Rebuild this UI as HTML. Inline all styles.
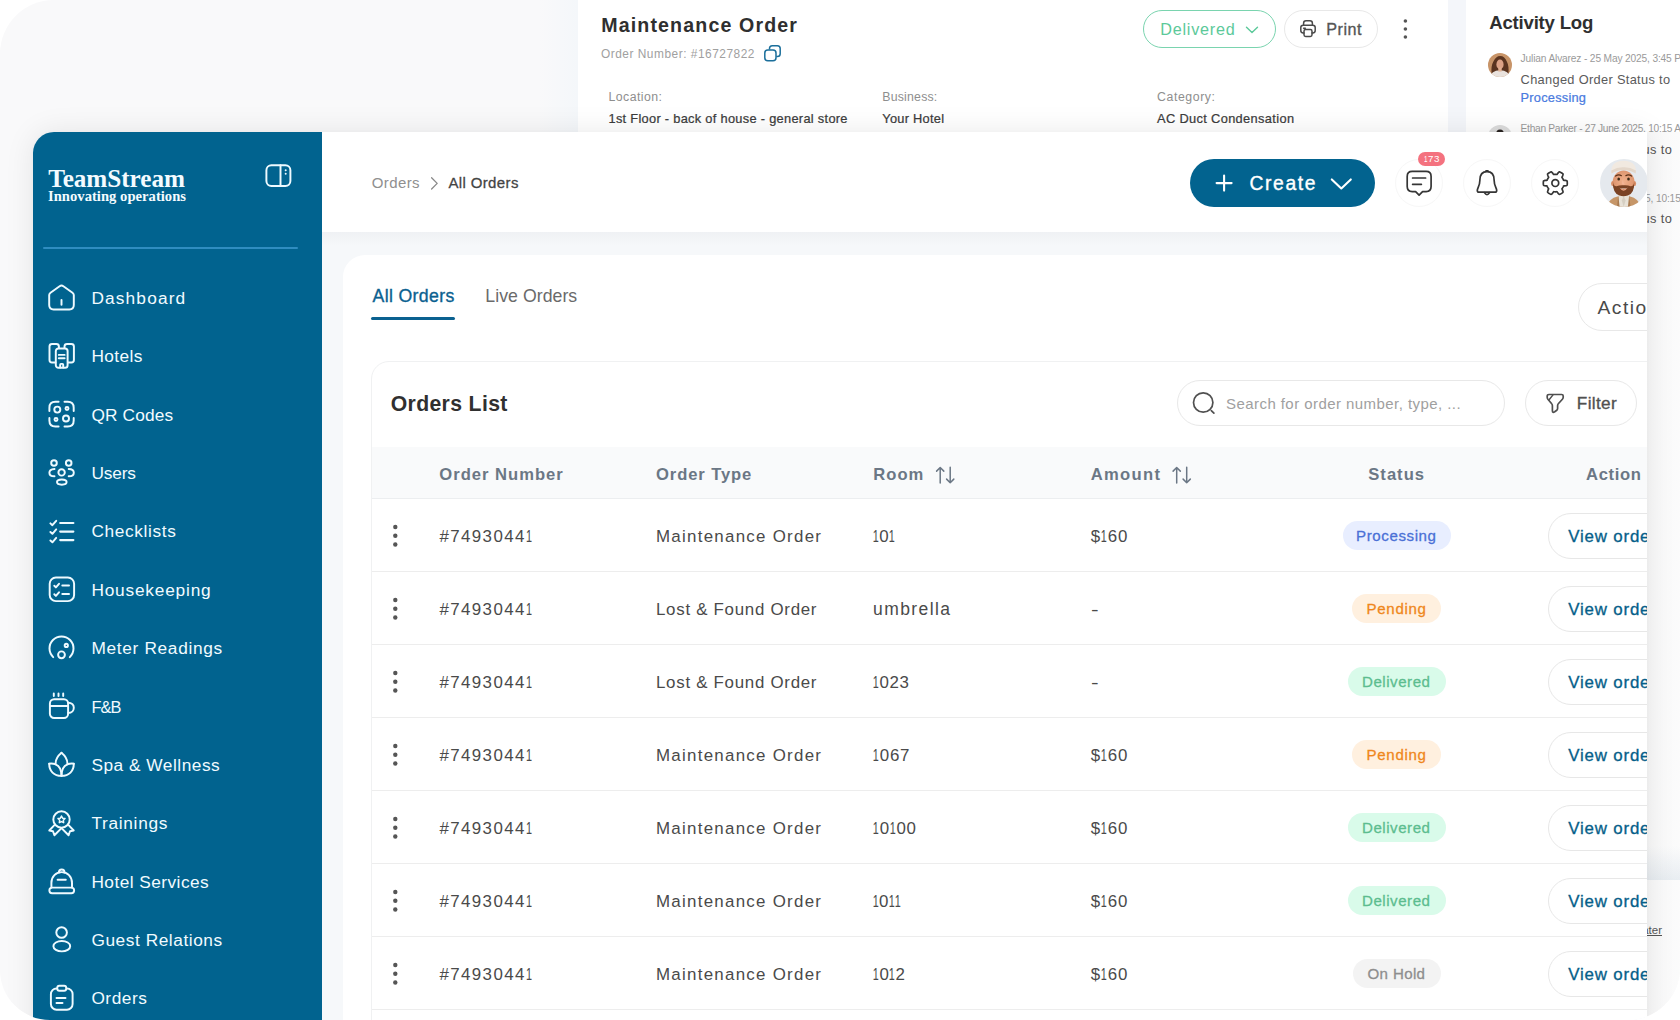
<!DOCTYPE html>
<html lang="en">
<head>
<meta charset="utf-8">
<title>TeamStream – Orders</title>
<style>
*{box-sizing:border-box;margin:0;padding:0}
html,body{width:1680px;height:1020px;overflow:hidden;background:#fff}
body{position:relative;font-family:"Liberation Sans",sans-serif}
.abs,.t,svg.i{position:absolute}
.t{white-space:nowrap;line-height:1;display:block}
#canvas{position:absolute;left:0;top:0;width:1680px;height:1020px;background:#f9f9fa;border-radius:54px 0 52px 50px;overflow:hidden}
#front{position:absolute;left:0;top:0;width:1680px;height:1020px;clip-path:inset(132px 33px 0 33px round 21px 0 0 0)}
#fshadow{position:absolute;left:33px;top:132px;width:1614px;height:920px;border-radius:21px 0 0 0;box-shadow:0 0 30px rgba(0,0,0,.085),0 0 5px rgba(0,0,0,.025)}
svg.i{overflow:visible}
.n1{font-style:normal;display:inline-block;transform:scaleX(.64);margin:0 -0.1em 0 -0.105em}
.w{fill:none;stroke:#eefaff;stroke-width:1.95;stroke-linecap:round;stroke-linejoin:round}
.k{fill:none;stroke:#353535;stroke-width:1.7;stroke-linecap:round;stroke-linejoin:round}
</style>
</head>
<body>
<div id="canvas">
<div class="abs" style="left:538px;top:-10px;width:40px;height:160px;background:linear-gradient(90deg,rgba(244,247,250,0),#f4f7fa)"></div>
<div class="abs" style="left:578px;top:-10px;width:870px;height:170px;background:#fff"></div>
<div class="abs" style="left:1448px;top:-10px;width:18px;height:170px;background:#f4f6fa"></div>
<div class="abs" style="left:1466px;top:-10px;width:230px;height:878px;background:#fff"></div>
<div class="abs" style="left:1466px;top:846px;width:230px;height:34px;background:linear-gradient(180deg,#fff,#ecf1f5)"></div>
<div class="abs" style="left:1466px;top:880px;width:230px;height:160px;background:#fff"></div>
<div class="abs" style="left:1647px;top:132px;width:33px;height:900px;background:linear-gradient(90deg,rgba(60,60,70,.035),rgba(60,60,70,.02))"></div>
<div class="abs" style="left:1143px;top:10px;width:133px;height:38px;border:1.4px solid #7ad4af;border-radius:19px"></div>
<div class="abs" style="left:1284px;top:10px;width:94px;height:38px;border:1px solid #e8e8e8;border-radius:19px"></div>
<svg class="i" style="left:1488.2px;top:52.7px" width="24" height="24" viewBox="0 0 24 24"><defs><clipPath id="ca"><circle cx="12" cy="12" r="12"/></clipPath></defs><g clip-path="url(#ca)"><rect width="24" height="24" fill="#c89468"/><path d="M3.6 21 Q2.8 13 5.4 8.6 Q7.8 3 12.2 3 Q16.8 3 18.8 8.6 Q21.2 13 20.4 21 Z" fill="#5a3420"/><ellipse cx="12" cy="11.4" rx="3.6" ry="4.9" fill="#dca286"/><path d="M2 24 Q3 17.6 12 17.2 Q21 17.6 22 24 Z" fill="#e9e2dd"/><rect x="10.3" y="14.5" width="3.4" height="4" fill="#e2b092"/></g></svg>
<svg class="i" style="left:1488.2px;top:124.5px" width="24" height="24" viewBox="0 0 24 24"><defs><clipPath id="cb"><circle cx="12" cy="12" r="12"/></clipPath></defs><g clip-path="url(#cb)"><rect width="24" height="24" fill="#dcdcdc"/><ellipse cx="12" cy="10.5" rx="3.6" ry="4.4" fill="#d9a88a"/><path d="M8 9.5 Q8 4.5 12 4.5 Q16 4.5 16 9.5 Q14 7 12 7.2 Q10 7 8 9.5Z" fill="#2a2422"/><path d="M3 24 Q3 17 12 17 Q21 17 21 24 Z" fill="#3b3f46"/></g></svg>
<svg class="i" style="left:0;top:0" width="1680" height="1020" viewBox="0 0 1680 1020"><g fill="none" stroke="#1b6f9b" stroke-width="1.5" stroke-linejoin="round"><path d="M769.5 49.6 V48.6 Q769.5 45.8 772.3 45.8 H777.4 Q780.2 45.8 780.2 48.6 V53.7 Q780.2 56.5 777.4 56.5 H776.3"/><rect x="764.8" y="50" width="11.2" height="10.8" rx="3"/></g><path d="M1246.5 27.3 L1252 32.6 L1257.5 27.3" fill="none" stroke="#5cc99a" stroke-width="1.4" stroke-linecap="round" stroke-linejoin="round"/><g fill="none" stroke="#4a4a4a" stroke-width="1.5" stroke-linejoin="round" stroke-linecap="round"><path d="M1303.6 25.2 V23.2 Q1303.6 20.8 1306 20.8 H1310 Q1312.4 20.8 1312.4 23.2 V25.2"/><path d="M1304 33 H1303.2 Q1300.8 33 1300.8 30.6 V27.6 Q1300.8 25.2 1303.2 25.2 H1312.8 Q1315.2 25.2 1315.2 27.6 V30.6 Q1315.2 33 1312.8 33 H1312"/><rect x="1304" y="29.6" width="8" height="6.8" rx="1.6"/><path d="M1303.6 28.3 H1305.4"/></g><g fill="#555"><circle cx="1405.4" cy="21" r="1.8"/><circle cx="1405.4" cy="29" r="1.8"/><circle cx="1405.4" cy="37" r="1.8"/></g></svg>
<span class="t" style="left:601.20px;top:14px;line-height:22px;font-size:19.6px;color:#2f2f2f;font-family:'Liberation Sans',sans-serif;font-weight:700;letter-spacing:1.145px;">Maintenance Order</span>
<span class="t" style="left:601.00px;top:47px;line-height:14px;font-size:11.9px;color:#a0a0a0;font-family:'Liberation Sans',sans-serif;font-weight:400;letter-spacing:0.512px;">Order Number: #16727822</span>
<span class="t" style="left:608.50px;top:90px;line-height:14px;font-size:12.3px;color:#8e8e8e;font-family:'Liberation Sans',sans-serif;font-weight:400;letter-spacing:0.447px;">Location:</span>
<span class="t" style="left:608.50px;top:111px;line-height:15px;font-size:12.8px;color:#3c3c3c;font-family:'Liberation Sans',sans-serif;font-weight:400;-webkit-text-stroke:0.24px currentColor;letter-spacing:0.302px;">1st Floor - back of house - general store</span>
<span class="t" style="left:882.30px;top:90px;line-height:14px;font-size:12.3px;color:#8e8e8e;font-family:'Liberation Sans',sans-serif;font-weight:400;letter-spacing:0.209px;">Business:</span>
<span class="t" style="left:882.30px;top:111px;line-height:15px;font-size:12.8px;color:#3c3c3c;font-family:'Liberation Sans',sans-serif;font-weight:400;-webkit-text-stroke:0.24px currentColor;letter-spacing:0.267px;">Your Hotel</span>
<span class="t" style="left:1157.00px;top:90px;line-height:14px;font-size:12.3px;color:#8e8e8e;font-family:'Liberation Sans',sans-serif;font-weight:400;letter-spacing:0.584px;">Category:</span>
<span class="t" style="left:1157.00px;top:111px;line-height:15px;font-size:12.8px;color:#3c3c3c;font-family:'Liberation Sans',sans-serif;font-weight:400;-webkit-text-stroke:0.24px currentColor;letter-spacing:0.359px;">AC Duct Condensation</span>
<span class="t" style="left:1160.30px;top:20px;line-height:18px;font-size:16.2px;color:#5cc99a;font-family:'Liberation Sans',sans-serif;font-weight:400;letter-spacing:0.751px;">Delivered</span>
<span class="t" style="left:1326.30px;top:20px;line-height:18px;font-size:16.2px;color:#555;font-family:'Liberation Sans',sans-serif;font-weight:400;-webkit-text-stroke:0.31px currentColor;letter-spacing:0.476px;">Print</span>
<span class="t" style="left:1489.20px;top:12px;line-height:21px;font-size:18.6px;color:#2f2f2f;font-family:'Liberation Sans',sans-serif;font-weight:700;letter-spacing:-0.201px;">Activity Log</span>
<span class="t" style="left:1520.60px;top:53px;line-height:11px;font-size:10.2px;color:#9a9a9a;font-family:'Liberation Sans',sans-serif;font-weight:400;letter-spacing:-0.155px;">Julian Alvarez - 25 May 2025, 3:45 PM</span>
<span class="t" style="left:1520.60px;top:72px;line-height:15px;font-size:12.8px;color:#5a5a5a;font-family:'Liberation Sans',sans-serif;font-weight:400;letter-spacing:0.324px;">Changed Order Status to</span>
<span class="t" style="left:1520.60px;top:90px;line-height:15px;font-size:12.8px;color:#4a7be0;font-family:'Liberation Sans',sans-serif;font-weight:400;-webkit-text-stroke:0.24px currentColor;letter-spacing:0.232px;">Processing</span>
<span class="t" style="left:1520.60px;top:123px;line-height:11px;font-size:10.2px;color:#9a9a9a;font-family:'Liberation Sans',sans-serif;font-weight:400;letter-spacing:-0.289px;">Ethan Parker - 27 June 2025, 10:15 AM</span>
<span class="t" style="left:1520.60px;top:142px;line-height:15px;font-size:12.8px;color:#555;font-family:'Liberation Sans',sans-serif;font-weight:400;letter-spacing:0.408px;">Changed Order Status to</span>
<span class="t" style="left:1520.60px;top:160px;line-height:15px;font-size:12.8px;color:#ef871b;font-family:'Liberation Sans',sans-serif;font-weight:400;-webkit-text-stroke:0.24px currentColor;letter-spacing:0.405px;">Pending</span>
<span class="t" style="left:1520.60px;top:193px;line-height:11px;font-size:10.2px;color:#9a9a9a;font-family:'Liberation Sans',sans-serif;font-weight:400;letter-spacing:-0.148px;">Olivia Bennett - 27 June 2025, 10:15 AM</span>
<span class="t" style="left:1520.60px;top:211px;line-height:15px;font-size:12.8px;color:#555;font-family:'Liberation Sans',sans-serif;font-weight:400;letter-spacing:0.408px;">Changed Order Status to</span>
<span class="t" style="right:18.00px;top:924px;line-height:12px;font-size:11.5px;color:#555;font-family:'Liberation Sans',sans-serif;font-weight:400;text-decoration:underline;">Read later</span>
<div id="fshadow"></div>
<div id="front">
<div class="abs" style="left:33px;top:132px;width:289px;height:900px;background:#01638f"></div>
<div class="abs" style="left:322px;top:132px;width:1400px;height:100px;background:#fff"></div>
<div class="abs" style="left:322px;top:232px;width:1400px;height:800px;background:#f6f8fa"></div>
<div class="abs" style="left:322px;top:232px;width:1400px;height:14px;background:linear-gradient(180deg,rgba(233,235,238,.5),rgba(246,248,250,0))"></div>
<div class="abs" style="left:343px;top:255px;width:1400px;height:800px;background:#fff;border-radius:22px 0 0 0"></div>
<div class="abs" style="left:371px;top:361px;width:1400px;height:800px;background:#fff;border:1px solid #f0f1f2;border-radius:18px 0 0 0"></div>
<div class="abs" style="left:372px;top:447px;width:1400px;height:51px;background:#f9fafb"></div>
<div class="abs" style="left:372px;top:498px;width:1400px;height:1px;background:#eceef0"></div>
<div class="abs" style="left:372px;top:571px;width:1400px;height:1px;background:#ededed"></div>
<div class="abs" style="left:372px;top:644px;width:1400px;height:1px;background:#ededed"></div>
<div class="abs" style="left:372px;top:717px;width:1400px;height:1px;background:#ededed"></div>
<div class="abs" style="left:372px;top:790px;width:1400px;height:1px;background:#ededed"></div>
<div class="abs" style="left:372px;top:863px;width:1400px;height:1px;background:#ededed"></div>
<div class="abs" style="left:372px;top:936px;width:1400px;height:1px;background:#ededed"></div>
<div class="abs" style="left:372px;top:1009px;width:1400px;height:1px;background:#ededed"></div>
<div class="abs" style="left:43px;top:246.5px;width:255px;height:2px;background:#2f8dc0;border-radius:1px"></div>
<div class="abs" style="left:371px;top:316.5px;width:84px;height:3px;background:#0b6190;border-radius:2px"></div>
<div class="abs" style="left:1577.5px;top:283px;width:160px;height:47.5px;border:1px solid #e8e8e8;border-radius:24px"></div>
<div class="abs" style="left:1177.3px;top:380px;width:327.7px;height:46px;border:1px solid #e8e8e8;border-radius:23px"></div>
<div class="abs" style="left:1525px;top:380px;width:111.7px;height:46px;border:1px solid #e8e8e8;border-radius:23px"></div>
<div class="abs" style="left:1190px;top:159px;width:185px;height:48px;background:#02638f;border-radius:24px"></div>
<div class="abs" style="left:1395px;top:159px;width:48px;height:48px;border:1px solid #f7f7f7;border-radius:24px"></div>
<div class="abs" style="left:1463px;top:159px;width:48px;height:48px;border:1px solid #f7f7f7;border-radius:24px"></div>
<div class="abs" style="left:1531px;top:159px;width:48px;height:48px;border:1px solid #f7f7f7;border-radius:24px"></div>
<div class="abs" style="left:1418.2px;top:151.5px;width:26.8px;height:14.3px;background:#f4727f;border-radius:7.2px"></div>
<div class="abs" style="left:1342.5px;top:521.0px;width:108px;height:29px;background:#e8eeff;border-radius:14.5px"></div>
<div class="abs" style="left:1548px;top:513.0px;width:170px;height:45.6px;border:1px solid #e7e7e7;border-radius:23px"></div>
<div class="abs" style="left:1352.0px;top:594.0px;width:89px;height:29px;background:#fff0df;border-radius:14.5px"></div>
<div class="abs" style="left:1548px;top:586.0px;width:170px;height:45.6px;border:1px solid #e7e7e7;border-radius:23px"></div>
<div class="abs" style="left:1347.5px;top:667.0px;width:98px;height:29px;background:#d9fbea;border-radius:14.5px"></div>
<div class="abs" style="left:1548px;top:659.0px;width:170px;height:45.6px;border:1px solid #e7e7e7;border-radius:23px"></div>
<div class="abs" style="left:1352.0px;top:740.0px;width:89px;height:29px;background:#fff0df;border-radius:14.5px"></div>
<div class="abs" style="left:1548px;top:732.0px;width:170px;height:45.6px;border:1px solid #e7e7e7;border-radius:23px"></div>
<div class="abs" style="left:1347.5px;top:813.0px;width:98px;height:29px;background:#d9fbea;border-radius:14.5px"></div>
<div class="abs" style="left:1548px;top:805.0px;width:170px;height:45.6px;border:1px solid #e7e7e7;border-radius:23px"></div>
<div class="abs" style="left:1347.5px;top:886.0px;width:98px;height:29px;background:#d9fbea;border-radius:14.5px"></div>
<div class="abs" style="left:1548px;top:878.0px;width:170px;height:45.6px;border:1px solid #e7e7e7;border-radius:23px"></div>
<div class="abs" style="left:1352.5px;top:959.0px;width:88px;height:29px;background:#f3f3f3;border-radius:14.5px"></div>
<div class="abs" style="left:1548px;top:951.0px;width:170px;height:45.6px;border:1px solid #e7e7e7;border-radius:23px"></div>
<svg class="i" style="left:0;top:0" width="1680" height="1020" viewBox="0 0 1680 1020"><g class="w" transform="translate(48 283.90)"><path d="M1.2 11.2 Q1.2 9.7 2.5 8.8 L11.6 2.3 Q13.5 1 15.4 2.3 L24.5 8.8 Q25.8 9.7 25.8 11.2 V21.2 Q25.8 25.6 21.4 25.6 H5.6 Q1.2 25.6 1.2 21.2 Z"/><path d="M13.5 16.2 V20.8"/></g><g class="w" transform="translate(48 342.30)"><path d="M7.4 20.3 H4 Q1.5 20.3 1.5 17.8 V4.2 Q1.5 1.7 4 1.7 H8.4 Q10.9 1.7 10.9 4.2 V5.6"/><path d="M20 20.3 H23.4 Q25.9 20.3 25.9 17.8 V4.2 Q25.9 1.7 23.4 1.7 H19 Q16.5 1.7 16.5 4.2 V5.6"/><rect x="7.8" y="6.2" width="11.8" height="19.3" rx="2.6"/><path d="M10.8 12.6 H16.6 M10.8 16 H16.6"/><path d="M12.2 25.3 V22.4 Q12.2 21.6 13 21.6 H14.4 Q15.2 21.6 15.2 22.4 V25.3"/></g><g class="w" transform="translate(48 400.70)"><path d="M1.4 10.3 V7 Q1.4 1 7.4 1 H10.6"/><path d="M16.5 1 H19.7 Q25.7 1 25.7 7 V10.3"/><path d="M1.4 17.3 V19.7 Q1.4 25.7 7.4 25.7 H10.6"/><path d="M16.5 25.7 H19.7 Q25.7 25.7 25.7 19.7 V17.3"/><circle cx="9.3" cy="8.9" r="3"/><circle cx="19" cy="7.8" r="1.5"/><circle cx="8" cy="18.8" r="1.5"/><circle cx="18" cy="17.8" r="3"/></g><g class="w" transform="translate(48 459.10)"><circle cx="6" cy="3.9" r="2.8"/><circle cx="20.7" cy="3.9" r="2.8"/><circle cx="13.6" cy="13.3" r="3.2"/><ellipse cx="13.8" cy="23" rx="4.8" ry="2.6"/><path d="M6.5 9.9 C2.5 9.9 1.4 12 1.4 13.6 C1.4 15.4 2.5 17.2 6.5 17.2"/><path d="M20.7 9.9 C24.7 9.9 25.8 12 25.8 13.6 C25.8 15.4 24.7 17.2 20.7 17.2"/></g><g class="w" transform="translate(48 517.50)"><path d="M2.4 5.9 L4.4 7.7 L8.2 3.3"/><path d="M12.2 5.5 H25.4" stroke-width="2.1"/><path d="M2.4 14.5 L4.4 16.3 L8.2 11.899999999999999"/><path d="M12.2 14.1 H25.4" stroke-width="2.1"/><path d="M2.4 23.0 L4.4 24.8 L8.2 20.400000000000002"/><path d="M12.2 22.6 H25.4" stroke-width="2.1"/></g><g class="w" transform="translate(48 575.90)"><rect x="1.7" y="1.6" width="24.4" height="23.6" rx="6.2"/><path d="M6.3 9.9 L7.9 11.5 L11 7.8999999999999995"/><path d="M14.3 9.6 H21"/><path d="M6.3 18.400000000000002 L7.9 20.0 L11 16.400000000000002"/><path d="M14.3 18.1 H21"/></g><g class="w" transform="translate(48 634.30)"><path d="M5.2 22.8 A12 12 0 1 1 21.8 22.8"/><circle cx="18.3" cy="11.1" r="1.6"/><circle cx="13.5" cy="20.5" r="3.4"/></g><g class="w" transform="translate(48 692.70)"><rect x="1.9" y="6.5" width="18.2" height="18.8" rx="4.2"/><path d="M1.9 13.2 H20.1"/><path d="M20.1 10 C24 10 25.8 12.5 25.8 15 C25.8 17.5 24 20.3 20.1 20.3"/><path d="M5.8 0.8 V3.2 M10.5 0.8 V3.2 M15.2 0.8 V3.2"/></g><g class="w" transform="translate(48 751.10)"><path d="M13.5 1.7 C9.3 5.2 7.3 9 7.6 13.2"/><path d="M13.5 1.7 C17.7 5.2 19.7 9 19.4 13.2"/><path d="M1.2 12.6 Q4.5 12.2 7.6 13.2 C11 14.6 13.5 18 13.5 24.8"/><path d="M25.8 12.6 Q22.5 12.2 19.4 13.2 C16 14.6 13.5 18 13.5 24.8"/><path d="M1.2 12.6 C1.2 20 6 24.8 13.5 24.8 C21 24.8 25.8 20 25.8 12.6"/></g><g class="w" transform="translate(48 809.50)"><circle cx="13.5" cy="10" r="8.2"/><path d="M13.50 6.50 L14.62 8.66 L17.02 9.06 L15.31 10.79 L15.67 13.19 L13.50 12.10 L11.33 13.19 L11.69 10.79 L9.98 9.06 L12.38 8.66 Z" stroke-width="1.5"/><path d="M6.4 15.6 L1.3 21 L5 21.8 L6.4 25.8 L13.5 18.6 L20.6 25.8 L22 21.8 L25.7 21 L20.6 15.6"/></g><g class="w" transform="translate(48 867.90)"><rect x="1.4" y="19.7" width="24.7" height="5.6" rx="2.7"/><path d="M3.4 19.7 V15 C3.4 8.5 8 4.2 13.7 4.2 C19.4 4.2 24 8.5 24 15 V19.7"/><path d="M10.9 4.6 C10.9 0.5 16.5 0.5 16.5 4.6"/><path d="M9.6 11.9 H17.8"/></g><g class="w" transform="translate(48 926.30)"><circle cx="13.6" cy="6.2" r="5.3"/><ellipse cx="13.8" cy="19.9" rx="8.4" ry="5.2"/></g><g class="w" transform="translate(48 984.70)"><rect x="2.9" y="3.8" width="21.7" height="21.2" rx="5.6"/><rect x="9.3" y="1.1" width="8.9" height="4.9" rx="2" fill="#01638f"/><path d="M8.5 13.2 H17.5 M8.5 18.3 H14.5"/></g><g class="w"><rect x="266.4" y="165.2" width="24" height="20.9" rx="5"/><path d="M280.5 165.2 V186.1"/></g><g fill="#eefaff"><circle cx="285.7" cy="170.3" r="1"/><circle cx="285.7" cy="173.8" r="1"/></g><path d="M431.6 177.8 L437.2 183.4 L431.6 189" fill="none" stroke="#8a8a8a" stroke-width="1.3" stroke-linecap="round" stroke-linejoin="round"/><g fill="none" stroke="#fff" stroke-width="2.1" stroke-linecap="round" stroke-linejoin="round"><path d="M1216.6 183.1 H1231.6 M1224.1 175.6 V190.6"/><path d="M1331.8 179.4 L1341.3 188.4 L1350.8 179.4"/></g><g class="k"><path d="M1412.2 171.4 H1426.1 Q1431.1 171.4 1431.1 176.4 V186.6 Q1431.1 191.6 1426.1 191.6 H1422.6 L1419.1 195.2 L1415.6 191.6 H1412.2 Q1407.2 191.6 1407.2 186.6 V176.4 Q1407.2 171.4 1412.2 171.4 Z"/><path d="M1412.6 178 H1425.6 M1412.6 184.3 H1421.4"/></g><g class="k"><path d="M1487 171.6 C1481.6 171.6 1479.9 176 1479.9 180 C1479.9 186 1477.3 188.2 1477.3 190.4 C1477.3 191.5 1478.1 192.1 1479.1 192.1 H1494.9 C1495.9 192.1 1496.7 191.5 1496.7 190.4 C1496.7 188.2 1494.1 186 1494.1 180 C1494.1 176 1492.4 171.6 1487 171.6 Z"/><path d="M1484.4 192.6 Q1487 196.6 1489.6 192.6"/><path d="M1486 170.9 H1488"/></g><g class="k"><path d="M1555.30 174.40 L1555.68 174.41 L1556.06 174.43 L1556.44 174.47 L1556.81 174.52 L1557.31 174.03 L1557.98 173.10 L1558.73 172.21 L1559.40 171.84 L1559.89 172.01 L1560.37 172.22 L1560.84 172.46 L1561.30 172.71 L1561.75 172.98 L1562.18 173.27 L1562.61 173.58 L1563.00 173.92 L1563.01 174.68 L1562.62 175.78 L1562.15 176.83 L1561.97 177.50 L1562.20 177.80 L1562.43 178.11 L1562.64 178.43 L1562.83 178.75 L1563.02 179.08 L1563.18 179.42 L1563.34 179.77 L1563.49 180.12 L1564.16 180.31 L1565.30 180.42 L1566.44 180.63 L1567.10 181.02 L1567.20 181.53 L1567.25 182.05 L1567.29 182.58 L1567.30 183.10 L1567.29 183.62 L1567.25 184.15 L1567.20 184.67 L1567.10 185.18 L1566.44 185.57 L1565.30 185.78 L1564.16 185.89 L1563.49 186.08 L1563.34 186.43 L1563.18 186.78 L1563.02 187.12 L1562.83 187.45 L1562.64 187.77 L1562.43 188.09 L1562.20 188.40 L1561.97 188.70 L1562.15 189.37 L1562.62 190.42 L1563.01 191.52 L1563.00 192.28 L1562.61 192.62 L1562.18 192.93 L1561.75 193.22 L1561.30 193.49 L1560.84 193.74 L1560.37 193.98 L1559.89 194.19 L1559.40 194.36 L1558.73 193.99 L1557.98 193.10 L1557.31 192.17 L1556.81 191.68 L1556.44 191.73 L1556.06 191.77 L1555.68 191.79 L1555.30 191.80 L1554.92 191.79 L1554.54 191.77 L1554.16 191.73 L1553.79 191.68 L1553.29 192.17 L1552.62 193.10 L1551.87 193.99 L1551.20 194.36 L1550.71 194.19 L1550.23 193.98 L1549.76 193.74 L1549.30 193.49 L1548.85 193.22 L1548.42 192.93 L1547.99 192.62 L1547.60 192.28 L1547.59 191.52 L1547.98 190.42 L1548.45 189.37 L1548.63 188.70 L1548.40 188.40 L1548.17 188.09 L1547.96 187.77 L1547.77 187.45 L1547.58 187.12 L1547.42 186.78 L1547.26 186.43 L1547.11 186.08 L1546.44 185.89 L1545.30 185.78 L1544.16 185.57 L1543.50 185.18 L1543.40 184.67 L1543.35 184.15 L1543.31 183.62 L1543.30 183.10 L1543.31 182.58 L1543.35 182.05 L1543.40 181.53 L1543.50 181.02 L1544.16 180.63 L1545.30 180.42 L1546.44 180.31 L1547.11 180.12 L1547.26 179.77 L1547.42 179.42 L1547.58 179.08 L1547.77 178.75 L1547.96 178.43 L1548.17 178.11 L1548.40 177.80 L1548.63 177.50 L1548.45 176.83 L1547.98 175.78 L1547.59 174.68 L1547.60 173.92 L1547.99 173.58 L1548.42 173.27 L1548.85 172.98 L1549.30 172.71 L1549.76 172.46 L1550.23 172.22 L1550.71 172.01 L1551.20 171.84 L1551.87 172.21 L1552.62 173.10 L1553.29 174.03 L1553.79 174.52 L1554.16 174.47 L1554.54 174.43 L1554.92 174.41 Z"/><circle cx="1555.3" cy="183.1" r="3.4"/></g><g fill="none" stroke="#505050" stroke-width="1.7" stroke-linecap="round"><circle cx="1203.2" cy="402.5" r="9.7"/><path d="M1211.3 410.6 L1213.9 413.2"/></g><path d="M1549 394.5 H1561.6 Q1563.2 394.5 1563.2 396.1 V397.2 Q1563.2 398.3 1562.4 399.2 L1558.3 403.8 Q1557.6 404.6 1557.6 405.7 V408.6 Q1557.6 409.6 1556.8 410.2 L1554.7 411.8 Q1552.4 413.2 1552.4 410.8 V405.7 Q1552.4 404.6 1551.7 403.8 L1547.9 399.2 Q1547.2 398.3 1547.2 397.2 V396.1 Q1547.2 394.5 1549 394.5 Z" fill="none" stroke="#4f4f4f" stroke-width="1.7" stroke-linejoin="round"/><path d="M1553 394.9 L1548.9 400" fill="none" stroke="#4f4f4f" stroke-width="1.5" stroke-linecap="round"/><g fill="none" stroke="#6b7785" stroke-width="1.5" stroke-linecap="round" stroke-linejoin="round"><path d="M940.2 483 V467.5 M936.6 471.1 L940.2 467.5 L943.8 471.1"/><path d="M950.2 467.2 V482.7 M946.6 479.1 L950.2 482.7 L953.8 479.1"/></g><g fill="none" stroke="#6b7785" stroke-width="1.5" stroke-linecap="round" stroke-linejoin="round"><path d="M1176.7 483 V467.5 M1173.1 471.1 L1176.7 467.5 L1180.3 471.1"/><path d="M1186.7 467.2 V482.7 M1183.1 479.1 L1186.7 482.7 L1190.3 479.1"/></g><g fill="#555"><circle cx="395.3" cy="527.0" r="2.2"/><circle cx="395.3" cy="535.7" r="2.2"/><circle cx="395.3" cy="544.5" r="2.2"/></g><g fill="#555"><circle cx="395.3" cy="600.0" r="2.2"/><circle cx="395.3" cy="608.7" r="2.2"/><circle cx="395.3" cy="617.5" r="2.2"/></g><g fill="#555"><circle cx="395.3" cy="673.0" r="2.2"/><circle cx="395.3" cy="681.7" r="2.2"/><circle cx="395.3" cy="690.5" r="2.2"/></g><g fill="#555"><circle cx="395.3" cy="746.0" r="2.2"/><circle cx="395.3" cy="754.7" r="2.2"/><circle cx="395.3" cy="763.5" r="2.2"/></g><g fill="#555"><circle cx="395.3" cy="819.0" r="2.2"/><circle cx="395.3" cy="827.7" r="2.2"/><circle cx="395.3" cy="836.5" r="2.2"/></g><g fill="#555"><circle cx="395.3" cy="892.0" r="2.2"/><circle cx="395.3" cy="900.7" r="2.2"/><circle cx="395.3" cy="909.5" r="2.2"/></g><g fill="#555"><circle cx="395.3" cy="965.0" r="2.2"/><circle cx="395.3" cy="973.7" r="2.2"/><circle cx="395.3" cy="982.5" r="2.2"/></g></svg>
<svg class="i" style="left:1599.6px;top:159px" width="48" height="48" viewBox="0 0 48 48"><defs><clipPath id="cc"><circle cx="24" cy="24" r="24"/></clipPath><radialGradient id="gsk" cx="50%" cy="45%" r="60%"><stop offset="0" stop-color="#f0b08c"/><stop offset="1" stop-color="#d98f68"/></radialGradient></defs><g clip-path="url(#cc)"><rect width="48" height="48" fill="#e5e9ee"/><path d="M6.5 48 Q9 39.5 17.5 37.6 L30 37.6 Q38.5 39.5 41 48 Z" fill="#c69668"/><path d="M18.3 35 L18.3 48 L29.2 48 L29.2 35 Z" fill="#e8e2d7"/><path d="M18.3 36 L17 48 L19.6 48 Z M29.2 36 L30.5 48 L27.9 48 Z" fill="#a87a50"/><path d="M23.7 37 L21.8 41.5 L23.7 48 L25.6 41.5 Z" fill="#d6cfc2"/><ellipse cx="23.6" cy="23.6" rx="11" ry="12" fill="url(#gsk)"/><ellipse cx="12.6" cy="24.4" rx="1.5" ry="2.5" fill="#d98f68"/><ellipse cx="34.6" cy="24.4" rx="1.5" ry="2.5" fill="#d98f68"/><path d="M12.9 23 Q12.6 34.5 19.5 36.6 Q23.6 38 27.7 36.6 Q34.6 34.5 34.3 23 Q33.6 27.6 30.6 27.3 Q27.5 25.9 23.6 26.3 Q19.7 25.9 16.6 27.3 Q13.6 27.6 12.9 23 Z" fill="#7a4325"/><path d="M19.4 28.6 Q23.6 31.8 27.8 28.6 Q26 31.6 23.6 31.7 Q21.2 31.6 19.4 28.6 Z" fill="#e9a180"/><path d="M20.6 29.2 Q23.6 30.4 26.6 29.2 Q23.6 29.5 20.6 29.2Z" fill="#fbeee6"/><path d="M22.4 20 Q23.6 25 25.2 25.3 Q23.6 26 22 25.3 Z" fill="#f4b79a" opacity=".8"/><path d="M11.6 14.6 Q9.6 2 23.6 1.7 Q37.6 2 35.6 14.6 Q29.8 10.6 23.6 10.9 Q17.4 10.6 11.6 14.6 Z" fill="#f1e9e0"/><path d="M11.6 14.6 Q17.4 10.6 23.6 10.9 Q29.8 10.6 35.6 14.6 Q35.9 13 35.9 11.6 Q29.8 8 23.6 8.3 Q17.4 8 11.3 11.6 Q11.3 13 11.6 14.6 Z" fill="#e4d7ca"/><ellipse cx="18.7" cy="20" rx="1.3" ry="1.5" fill="#3a2a18"/><ellipse cx="28.5" cy="20" rx="1.3" ry="1.5" fill="#3a2a18"/><path d="M15.6 17.1 Q18.6 14.9 21.4 16.7 M25.8 16.7 Q28.6 14.9 31.6 17.1" stroke="#5c3219" stroke-width="1.2" fill="none" stroke-linecap="round"/></g></svg>
<span class="t" style="left:48.20px;top:165px;line-height:27px;font-size:25.2px;color:#f4fbff;font-family:'Liberation Serif',serif;font-weight:700;letter-spacing:-0.036px;">TeamStream</span>
<span class="t" style="left:48.00px;top:188px;line-height:16px;font-size:14.6px;color:#f4fbff;font-family:'Liberation Serif',serif;font-weight:700;letter-spacing:0.027px;">Innovating operations</span>
<span class="t" style="left:91.40px;top:288px;line-height:20px;font-size:17.3px;color:#f2fbff;font-family:'Liberation Sans',sans-serif;font-weight:400;letter-spacing:1.157px;">Dashboard</span>
<span class="t" style="left:91.40px;top:346px;line-height:20px;font-size:17.3px;color:#f2fbff;font-family:'Liberation Sans',sans-serif;font-weight:400;letter-spacing:0.403px;">Hotels</span>
<span class="t" style="left:91.40px;top:405px;line-height:20px;font-size:17.3px;color:#f2fbff;font-family:'Liberation Sans',sans-serif;font-weight:400;letter-spacing:0.159px;">QR Codes</span>
<span class="t" style="left:91.40px;top:463px;line-height:20px;font-size:17.3px;color:#f2fbff;font-family:'Liberation Sans',sans-serif;font-weight:400;letter-spacing:-0.135px;">Users</span>
<span class="t" style="left:91.40px;top:521px;line-height:20px;font-size:17.3px;color:#f2fbff;font-family:'Liberation Sans',sans-serif;font-weight:400;letter-spacing:0.628px;">Checklists</span>
<span class="t" style="left:91.40px;top:580px;line-height:20px;font-size:17.3px;color:#f2fbff;font-family:'Liberation Sans',sans-serif;font-weight:400;letter-spacing:0.800px;">Housekeeping</span>
<span class="t" style="left:91.40px;top:638px;line-height:20px;font-size:17.3px;color:#f2fbff;font-family:'Liberation Sans',sans-serif;font-weight:400;letter-spacing:0.677px;">Meter Readings</span>
<span class="t" style="left:91.40px;top:698px;line-height:18px;font-size:16.4px;color:#f2fbff;font-family:'Liberation Sans',sans-serif;font-weight:400;letter-spacing:-0.945px;">F&amp;B</span>
<span class="t" style="left:91.40px;top:755px;line-height:20px;font-size:17.3px;color:#f2fbff;font-family:'Liberation Sans',sans-serif;font-weight:400;letter-spacing:0.510px;">Spa &amp; Wellness</span>
<span class="t" style="left:91.40px;top:813px;line-height:20px;font-size:17.3px;color:#f2fbff;font-family:'Liberation Sans',sans-serif;font-weight:400;letter-spacing:0.695px;">Trainings</span>
<span class="t" style="left:91.40px;top:872px;line-height:20px;font-size:17.3px;color:#f2fbff;font-family:'Liberation Sans',sans-serif;font-weight:400;letter-spacing:0.452px;">Hotel Services</span>
<span class="t" style="left:91.40px;top:930px;line-height:20px;font-size:17.3px;color:#f2fbff;font-family:'Liberation Sans',sans-serif;font-weight:400;letter-spacing:0.560px;">Guest Relations</span>
<span class="t" style="left:91.40px;top:988px;line-height:20px;font-size:17.3px;color:#f2fbff;font-family:'Liberation Sans',sans-serif;font-weight:400;letter-spacing:0.534px;">Orders</span>
<span class="t" style="left:371.80px;top:174px;line-height:17px;font-size:15px;color:#8f8f8f;font-family:'Liberation Sans',sans-serif;font-weight:400;letter-spacing:0.371px;">Orders</span>
<span class="t" style="left:448.40px;top:174px;line-height:17px;font-size:15px;color:#444;font-family:'Liberation Sans',sans-serif;font-weight:400;-webkit-text-stroke:0.28px currentColor;letter-spacing:0.368px;">All Orders</span>
<span class="t" style="left:1249.60px;top:173px;line-height:21px;font-size:19.3px;color:#fff;font-family:'Liberation Sans',sans-serif;font-weight:400;-webkit-text-stroke:0.37px currentColor;letter-spacing:1.585px;">Create</span>
<span class="t" style="left:1424.00px;top:153px;line-height:11px;font-size:9.8px;color:#fff;font-family:'Liberation Sans',sans-serif;font-weight:400;letter-spacing:0.513px;"><i class="n1">1</i>73</span>
<span class="t" style="left:372.60px;top:286px;line-height:20px;font-size:17.7px;color:#0b6190;font-family:'Liberation Sans',sans-serif;font-weight:400;-webkit-text-stroke:0.34px currentColor;letter-spacing:0.340px;">All Orders</span>
<span class="t" style="left:485.30px;top:286px;line-height:20px;font-size:17.7px;color:#6a6a6a;font-family:'Liberation Sans',sans-serif;font-weight:400;letter-spacing:0.048px;">Live Orders</span>
<span class="t" style="left:1597.50px;top:297px;line-height:21px;font-size:19.2px;color:#4a4a4a;font-family:'Liberation Sans',sans-serif;font-weight:400;letter-spacing:1.532px;">Actions</span>
<span class="t" style="left:390.70px;top:392px;line-height:23px;font-size:21.2px;color:#303030;font-family:'Liberation Sans',sans-serif;font-weight:700;letter-spacing:0.365px;">Orders List</span>
<span class="t" style="left:1226.00px;top:395px;line-height:17px;font-size:15px;color:#a0a0a0;font-family:'Liberation Sans',sans-serif;font-weight:400;letter-spacing:0.439px;">Search for order number, type, ...</span>
<span class="t" style="left:1576.80px;top:393px;line-height:20px;font-size:17.2px;color:#505050;font-family:'Liberation Sans',sans-serif;font-weight:400;-webkit-text-stroke:0.33px currentColor;letter-spacing:0.339px;">Filter</span>
<span class="t" style="left:439.30px;top:465px;line-height:19px;font-size:16.6px;color:#6b7785;font-family:'Liberation Sans',sans-serif;font-weight:700;letter-spacing:0.991px;">Order Number</span>
<span class="t" style="left:656.00px;top:465px;line-height:19px;font-size:16.6px;color:#6b7785;font-family:'Liberation Sans',sans-serif;font-weight:700;letter-spacing:0.889px;">Order Type</span>
<span class="t" style="left:873.30px;top:465px;line-height:19px;font-size:16.6px;color:#6b7785;font-family:'Liberation Sans',sans-serif;font-weight:700;letter-spacing:0.995px;">Room</span>
<span class="t" style="left:1090.70px;top:465px;line-height:19px;font-size:16.6px;color:#6b7785;font-family:'Liberation Sans',sans-serif;font-weight:700;letter-spacing:1.322px;">Amount</span>
<span class="t" style="left:1368.30px;top:465px;line-height:19px;font-size:16.6px;color:#6b7785;font-family:'Liberation Sans',sans-serif;font-weight:700;letter-spacing:0.996px;">Status</span>
<span class="t" style="left:1586.00px;top:465px;line-height:19px;font-size:16.6px;color:#6b7785;font-family:'Liberation Sans',sans-serif;font-weight:700;letter-spacing:0.675px;">Action</span>
<span class="t" style="left:439.50px;top:527px;line-height:19px;font-size:16.9px;color:#4a4a4a;font-family:'Liberation Sans',sans-serif;font-weight:400;letter-spacing:1.386px;">#7493044<i class="n1">1</i></span>
<span class="t" style="left:656.00px;top:527px;line-height:19px;font-size:16.9px;color:#4a4a4a;font-family:'Liberation Sans',sans-serif;font-weight:400;letter-spacing:1.275px;">Maintenance Order</span>
<span class="t" style="left:873.00px;top:527px;line-height:19px;font-size:16.9px;color:#4a4a4a;font-family:'Liberation Sans',sans-serif;font-weight:400;letter-spacing:0.344px;"><i class="n1">1</i>0<i class="n1">1</i></span>
<span class="t" style="left:1090.70px;top:527px;line-height:19px;font-size:16.9px;color:#4a4a4a;font-family:'Liberation Sans',sans-serif;font-weight:400;letter-spacing:0.815px;">$<i class="n1">1</i>60</span>
<span class="t" style="left:1356.00px;top:527px;line-height:17px;font-size:15.1px;color:#4a70d6;font-family:'Liberation Sans',sans-serif;font-weight:400;-webkit-text-stroke:0.29px currentColor;letter-spacing:0.592px;">Processing</span>
<span class="t" style="left:1568.20px;top:527px;line-height:19px;font-size:16.9px;color:#065f8a;font-family:'Liberation Sans',sans-serif;font-weight:400;-webkit-text-stroke:0.32px currentColor;letter-spacing:0.811px;">View order</span>
<span class="t" style="left:439.50px;top:600px;line-height:19px;font-size:16.9px;color:#4a4a4a;font-family:'Liberation Sans',sans-serif;font-weight:400;letter-spacing:1.386px;">#7493044<i class="n1">1</i></span>
<span class="t" style="left:656.00px;top:600px;line-height:19px;font-size:16.9px;color:#4a4a4a;font-family:'Liberation Sans',sans-serif;font-weight:400;letter-spacing:0.715px;">Lost &amp; Found Order</span>
<span class="t" style="left:873.00px;top:599px;line-height:20px;font-size:17.5px;color:#4a4a4a;font-family:'Liberation Sans',sans-serif;font-weight:400;letter-spacing:1.411px;">umbrella</span>
<span class="t" style="left:1091.00px;top:600px;line-height:19px;font-size:16.9px;color:#4a4a4a;font-family:'Liberation Sans',sans-serif;font-weight:400;display:inline-block;transform:scaleX(1.35);transform-origin:0 50%;">-</span>
<span class="t" style="left:1366.50px;top:600px;line-height:17px;font-size:15.1px;color:#ef871b;font-family:'Liberation Sans',sans-serif;font-weight:400;-webkit-text-stroke:0.29px currentColor;letter-spacing:0.682px;">Pending</span>
<span class="t" style="left:1568.20px;top:600px;line-height:19px;font-size:16.9px;color:#065f8a;font-family:'Liberation Sans',sans-serif;font-weight:400;-webkit-text-stroke:0.32px currentColor;letter-spacing:0.811px;">View order</span>
<span class="t" style="left:439.50px;top:673px;line-height:19px;font-size:16.9px;color:#4a4a4a;font-family:'Liberation Sans',sans-serif;font-weight:400;letter-spacing:1.386px;">#7493044<i class="n1">1</i></span>
<span class="t" style="left:656.00px;top:673px;line-height:19px;font-size:16.9px;color:#4a4a4a;font-family:'Liberation Sans',sans-serif;font-weight:400;letter-spacing:0.715px;">Lost &amp; Found Order</span>
<span class="t" style="left:873.00px;top:673px;line-height:19px;font-size:16.9px;color:#4a4a4a;font-family:'Liberation Sans',sans-serif;font-weight:400;letter-spacing:0.620px;"><i class="n1">1</i>023</span>
<span class="t" style="left:1091.00px;top:673px;line-height:19px;font-size:16.9px;color:#4a4a4a;font-family:'Liberation Sans',sans-serif;font-weight:400;display:inline-block;transform:scaleX(1.35);transform-origin:0 50%;">-</span>
<span class="t" style="left:1362.00px;top:673px;line-height:17px;font-size:15.1px;color:#5cbd8f;font-family:'Liberation Sans',sans-serif;font-weight:400;-webkit-text-stroke:0.29px currentColor;letter-spacing:0.529px;">Delivered</span>
<span class="t" style="left:1568.20px;top:673px;line-height:19px;font-size:16.9px;color:#065f8a;font-family:'Liberation Sans',sans-serif;font-weight:400;-webkit-text-stroke:0.32px currentColor;letter-spacing:0.811px;">View order</span>
<span class="t" style="left:439.50px;top:746px;line-height:19px;font-size:16.9px;color:#4a4a4a;font-family:'Liberation Sans',sans-serif;font-weight:400;letter-spacing:1.386px;">#7493044<i class="n1">1</i></span>
<span class="t" style="left:656.00px;top:746px;line-height:19px;font-size:16.9px;color:#4a4a4a;font-family:'Liberation Sans',sans-serif;font-weight:400;letter-spacing:1.275px;">Maintenance Order</span>
<span class="t" style="left:873.00px;top:746px;line-height:19px;font-size:16.9px;color:#4a4a4a;font-family:'Liberation Sans',sans-serif;font-weight:400;letter-spacing:0.786px;"><i class="n1">1</i>067</span>
<span class="t" style="left:1090.70px;top:746px;line-height:19px;font-size:16.9px;color:#4a4a4a;font-family:'Liberation Sans',sans-serif;font-weight:400;letter-spacing:0.815px;">$<i class="n1">1</i>60</span>
<span class="t" style="left:1366.50px;top:746px;line-height:17px;font-size:15.1px;color:#ef871b;font-family:'Liberation Sans',sans-serif;font-weight:400;-webkit-text-stroke:0.29px currentColor;letter-spacing:0.682px;">Pending</span>
<span class="t" style="left:1568.20px;top:746px;line-height:19px;font-size:16.9px;color:#065f8a;font-family:'Liberation Sans',sans-serif;font-weight:400;-webkit-text-stroke:0.32px currentColor;letter-spacing:0.811px;">View order</span>
<span class="t" style="left:439.50px;top:819px;line-height:19px;font-size:16.9px;color:#4a4a4a;font-family:'Liberation Sans',sans-serif;font-weight:400;letter-spacing:1.386px;">#7493044<i class="n1">1</i></span>
<span class="t" style="left:656.00px;top:819px;line-height:19px;font-size:16.9px;color:#4a4a4a;font-family:'Liberation Sans',sans-serif;font-weight:400;letter-spacing:1.275px;">Maintenance Order</span>
<span class="t" style="left:873.00px;top:819px;line-height:19px;font-size:16.9px;color:#4a4a4a;font-family:'Liberation Sans',sans-serif;font-weight:400;letter-spacing:0.723px;"><i class="n1">1</i>0<i class="n1">1</i>00</span>
<span class="t" style="left:1090.70px;top:819px;line-height:19px;font-size:16.9px;color:#4a4a4a;font-family:'Liberation Sans',sans-serif;font-weight:400;letter-spacing:0.815px;">$<i class="n1">1</i>60</span>
<span class="t" style="left:1362.00px;top:819px;line-height:17px;font-size:15.1px;color:#5cbd8f;font-family:'Liberation Sans',sans-serif;font-weight:400;-webkit-text-stroke:0.29px currentColor;letter-spacing:0.529px;">Delivered</span>
<span class="t" style="left:1568.20px;top:819px;line-height:19px;font-size:16.9px;color:#065f8a;font-family:'Liberation Sans',sans-serif;font-weight:400;-webkit-text-stroke:0.32px currentColor;letter-spacing:0.811px;">View order</span>
<span class="t" style="left:439.50px;top:892px;line-height:19px;font-size:16.9px;color:#4a4a4a;font-family:'Liberation Sans',sans-serif;font-weight:400;letter-spacing:1.386px;">#7493044<i class="n1">1</i></span>
<span class="t" style="left:656.00px;top:892px;line-height:19px;font-size:16.9px;color:#4a4a4a;font-family:'Liberation Sans',sans-serif;font-weight:400;letter-spacing:1.275px;">Maintenance Order</span>
<span class="t" style="left:873.00px;top:892px;line-height:19px;font-size:16.9px;color:#4a4a4a;font-family:'Liberation Sans',sans-serif;font-weight:400;letter-spacing:0.078px;"><i class="n1">1</i>0<i class="n1">1</i><i class="n1">1</i></span>
<span class="t" style="left:1090.70px;top:892px;line-height:19px;font-size:16.9px;color:#4a4a4a;font-family:'Liberation Sans',sans-serif;font-weight:400;letter-spacing:0.815px;">$<i class="n1">1</i>60</span>
<span class="t" style="left:1362.00px;top:892px;line-height:17px;font-size:15.1px;color:#5cbd8f;font-family:'Liberation Sans',sans-serif;font-weight:400;-webkit-text-stroke:0.29px currentColor;letter-spacing:0.529px;">Delivered</span>
<span class="t" style="left:1568.20px;top:892px;line-height:19px;font-size:16.9px;color:#065f8a;font-family:'Liberation Sans',sans-serif;font-weight:400;-webkit-text-stroke:0.32px currentColor;letter-spacing:0.811px;">View order</span>
<span class="t" style="left:439.50px;top:965px;line-height:19px;font-size:16.9px;color:#4a4a4a;font-family:'Liberation Sans',sans-serif;font-weight:400;letter-spacing:1.386px;">#7493044<i class="n1">1</i></span>
<span class="t" style="left:656.00px;top:965px;line-height:19px;font-size:16.9px;color:#4a4a4a;font-family:'Liberation Sans',sans-serif;font-weight:400;letter-spacing:1.275px;">Maintenance Order</span>
<span class="t" style="left:873.00px;top:965px;line-height:19px;font-size:16.9px;color:#4a4a4a;font-family:'Liberation Sans',sans-serif;font-weight:400;letter-spacing:0.427px;"><i class="n1">1</i>0<i class="n1">1</i>2</span>
<span class="t" style="left:1090.70px;top:965px;line-height:19px;font-size:16.9px;color:#4a4a4a;font-family:'Liberation Sans',sans-serif;font-weight:400;letter-spacing:0.815px;">$<i class="n1">1</i>60</span>
<span class="t" style="left:1367.50px;top:965px;line-height:17px;font-size:15.1px;color:#8e8e8e;font-family:'Liberation Sans',sans-serif;font-weight:400;-webkit-text-stroke:0.29px currentColor;letter-spacing:0.354px;">On Hold</span>
<span class="t" style="left:1568.20px;top:965px;line-height:19px;font-size:16.9px;color:#065f8a;font-family:'Liberation Sans',sans-serif;font-weight:400;-webkit-text-stroke:0.32px currentColor;letter-spacing:0.811px;">View order</span>
</div>
</div>
</body>
</html>
